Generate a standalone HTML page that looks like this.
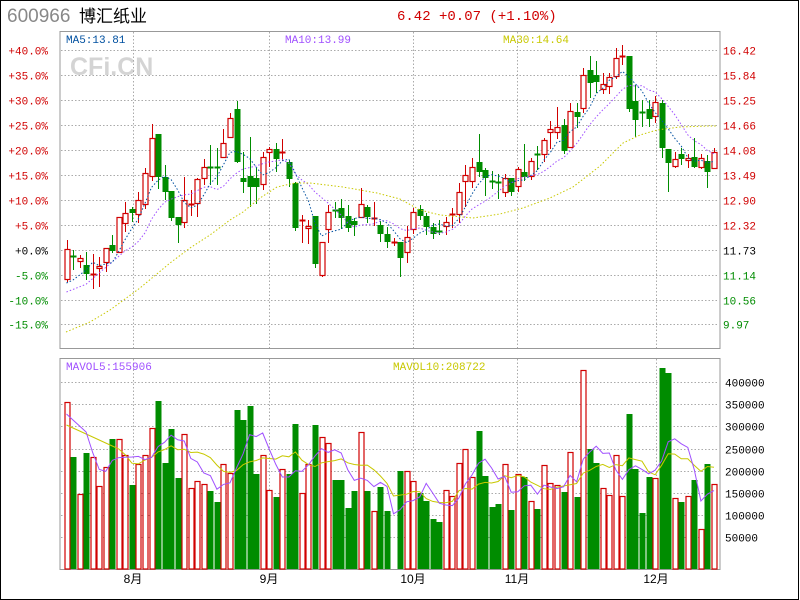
<!DOCTYPE html>
<html><head><meta charset="utf-8">
<style>
html,body{margin:0;padding:0;background:#fff;}
body{width:800px;height:600px;overflow:hidden;position:relative;}
svg{position:absolute;left:0;top:0;}
text{font-family:"Liberation Mono","DejaVu Sans Mono",monospace;font-size:11px;}
</style></head>
<body>
<svg id="s" width="800" height="600" xmlns="http://www.w3.org/2000/svg">
<rect x="0.5" y="0.5" width="798" height="599" fill="#fff" stroke="#000"/>
<text x="7" y="22" style="font-family:'Liberation Sans',sans-serif;font-size:19px" fill="#888">600966</text>
<text x="79" y="22" style="font-family:'Liberation Sans','Noto Sans CJK SC',sans-serif;font-size:17px" fill="#000">博汇纸业</text>
<text x="397" y="20" style="font-size:14px" fill="#d00000">6.42 +0.07 (+1.10%)</text>
<rect x="60" y="31.5" width="660" height="317" fill="none" stroke="#999"/>
<rect x="60" y="358.5" width="660" height="211" fill="none" stroke="#999"/>
<text x="70" y="75" style="font-family:'Liberation Sans',sans-serif;font-size:25px;font-weight:bold" fill="#d4d4d4">CFi.CN</text>
<g id="grid" stroke="#aaa" stroke-dasharray="1.5 2" stroke-width="1"></g>
<g id="lab"></g>
<g id="draw"></g>
<text x="66" y="43" fill="#0050a0">MA5:13.81</text>
<text x="285" y="43" fill="#a050ff">MA10:13.99</text>
<text x="503" y="43" fill="#c8c800">MA30:14.64</text>
<text x="66" y="370" fill="#a050ff">MAVOL5:155906</text>
<text x="393" y="370" fill="#c8c800">MAVOL10:208722</text>
</svg>
<script>
var NS="http://www.w3.org/2000/svg";
function el(p,t,a,txt){var e=document.createElementNS(NS,t);for(var k in a)e.setAttribute(k,a[k]);if(txt!==undefined)e.textContent=txt;document.getElementById(p).appendChild(e);return e;}
var R="#d00000",G="#008c00";
// grid
var lvls=["+40.0%","+35.0%","+30.0%","+25.0%","+20.0%","+15.0%","+10.0%","+5.0%","+0.0%","-5.0%","-10.0%","-15.0%"];
var rl=["16.42","15.84","15.25","14.66","14.08","13.49","12.90","12.32","11.73","11.14","10.56","9.97"];
for(var k=0;k<12;k++){var y=Math.round(50+24.95*k)+0.5;
 el("grid","line",{x1:61,x2:719,y1:y,y2:y});
 var c=k<8?R:(k==8?"#000":G);
 el("lab","text",{x:48,y:y+4,"text-anchor":"end",fill:c},lvls[k]);
 el("lab","text",{x:723,y:y+4,fill:c},rl[k]);}
[133,269,413,517,656].forEach(function(x){el("grid","line",{x1:x+.5,x2:x+.5,y1:32,y2:348});el("grid","line",{x1:x+.5,x2:x+.5,y1:359,y2:569});});
var vl=["400000","350000","300000","250000","200000","150000","100000","50000"];
for(k=0;k<8;k++){var y=Math.round(382+22.2*k)+0.5;el("grid","line",{x1:61,x2:719,y1:y,y2:y});el("lab","text",{x:725,y:y+4,fill:"#000"},vl[k]);}
var ms=[[133,"8月"],[269,"9月"],[413,"10月"],[517,"11月"],[656,"12月"]];
ms.forEach(function(m){el("lab","text",{x:m[0],y:583,"text-anchor":"middle",fill:"#000",style:"font-family:'Liberation Sans','Noto Sans CJK SC',sans-serif;font-size:12px"},m[1]);});
// candles [top,bottom,wickTop,wickBottom,type]
var C=[[249,279,240,282,'r'],[256,256,250,270,'g'],[258,261,255,268,'r'],[265,274,252,280,'g'],[274,274,254,289,'r'],[266,268,257,287,'r'],[248,262,248,272,'r'],[245,251,235,253,'g'],[217,252,217,252,'r'],[213,223,202,232,'r'],
[209,213,207,222,'g'],[200,214,192,223,'r'],[173,204,168,209,'r'],[138,176,124,181,'r'],[134,177,134,189,'g'],[177,192,165,200,'g'],[191,218,191,221,'g'],[217,225,217,243,'g'],[200,222,177,228,'r'],[204,204,190,216,'r'],
[179,203,178,217,'r'],[167,178,159,185,'r'],[167,167,145,185,'g'],[167,167,148,185,'g'],[143,157,129,158,'r'],[118,137,113,138,'r'],[109,162,101,163,'g'],[178,182,152,193,'g'],[176,187,137,207,'g'],[178,187,168,204,'g'],
[157,184,152,190,'r'],[149,152,147,167,'r'],[149,159,143,172,'g'],[152,152,139,161,'r'],[162,179,160,187,'g'],[183,228,182,231,'g'],[220,220,215,243,'r'],[226,228,220,244,'r'],[216,264,216,268,'g'],[242,275,242,277,'r'],
[212,229,205,243,'r'],[210,210,202,218,'g'],[208,218,199,229,'g'],[216,228,205,232,'g'],[221,225,218,236,'g'],[204,217,188,218,'r'],[207,217,205,223,'g'],[218,218,202,226,'r'],[225,234,221,242,'g'],[234,242,227,248,'g'],
[242,242,238,246,'r'],[242,258,242,277,'g'],[237,252,226,263,'r'],[212,229,208,234,'r'],[209,216,205,220,'g'],[216,227,213,235,'g'],[227,234,223,239,'g'],[231,231,220,235,'g'],[222,226,217,235,'r'],[214,214,208,228,'r'],
[192,214,183,223,'r'],[175,181,165,207,'r'],[167,181,158,188,'r'],[162,172,134,177,'g'],[170,178,168,196,'g'],[181,181,171,189,'g'],[182,183,174,199,'g'],[178,192,174,197,'r'],[178,192,178,196,'g'],[169,186,167,192,'r'],
[172,177,144,181,'g'],[161,176,158,180,'r'],[154,154,146,170,'g'],[140,154,138,162,'r'],[129,132,121,149,'r'],[127,132,107,139,'r'],[125,151,119,154,'g'],[111,147,103,147,'r'],[112,117,103,128,'g'],[75,108,68,113,'r'],
[70,83,56,98,'g'],[75,82,61,93,'g'],[84,89,73,94,'r'],[77,86,73,94,'r'],[58,76,48,79,'r'],[56,56,45,65,'r'],[56,109,56,112,'g'],[101,120,85,137,'g'],[112,112,100,127,'g'],[109,119,100,127,'g'],
[102,116,96,123,'r'],[103,148,100,158,'g'],[149,163,149,192,'g'],[159,166,152,168,'r'],[154,159,148,165,'g'],[158,160,154,168,'r'],[157,167,138,168,'g'],[158,167,154,169,'r'],[161,172,155,188,'g'],[152,168,148,168,'r']];
var V=[402,457,494,453,457,486,467,439,439,455,485,464,455,428,401,463,429,478,434,488,481,484,491,502,464,473,410,420,406,474,
455,490,497,469,474,424,493,464,425,437,443,480,480,508,491,432,491,511,487,511,569,471,471,481,493,501,519,522,490,496,
463,449,477,431,476,507,504,464,510,474,477,501,509,465,483,485,492,452,497,370,449,463,488,495,455,496,414,469,513,477,
478,368,373,498,502,496,480,529,464,484];
function cx(i){return 66.5+6.54*i;}
var close=[],g="draw";
C.forEach(function(c,i){var x=Math.round(cx(i))+0.5,col=c[4]=='r'?R:G;
 close.push(c[4]=='r'?c[0]:c[1]);
 el(g,"line",{x1:x,x2:x,y1:c[2],y2:c[3],stroke:col});
 if(c[1]-c[0]<1.5){el(g,"line",{x1:x-3,x2:x+3,y1:c[0]+.5,y2:c[0]+.5,stroke:col,"stroke-width":2});}
 else if(c[4]=='r'){el(g,"rect",{x:x-2.5,y:c[0]+.5,width:5,height:c[1]-c[0],fill:"#fff",stroke:col,"stroke-width":1.2});}
 else{el(g,"rect",{x:x-3,y:c[0],width:6,height:c[1]-c[0],fill:col});}
 // volume
 var vy=V[i];if(vy<568){
 if(c[4]=='r')el(g,"rect",{x:x-2.5,y:vy+.5,width:5,height:568.5-vy,fill:"#fff",stroke:col,"stroke-width":1.2});
 else el(g,"rect",{x:x-3,y:vy,width:6,height:569-vy,fill:col});}
});
function ma(a,n,base){var r=[];for(var i=0;i<a.length;i++){var s=0,m=0;for(var j=Math.max(0,i-n+1);j<=i;j++){s+=a[j];m++;}r.push(s/m);}return r;}
function line(a,col,dash,start){var p=[];for(var i=start;i<a.length;i++)p.push(cx(i).toFixed(1)+","+a[i].toFixed(1));
 var at={points:p.join(" "),fill:"none",stroke:col,"stroke-width":1};if(dash)at["stroke-dasharray"]=dash;el(g,"polyline",at);}
var m5=ma(close,5),m10=ma(close,10);
m5[0]=283;m5[1]=280;m5[2]=275;m5[3]=270;
for(var i=0;i<9;i++)m10[i]=292-i*2.6+ (i>3?-(i-3)*3:0);
line(m10,"#a050ff","1.5 2",0);
line(m5,"#0050a0","1.5 2",0);
el(g,"polyline",{points:"66,332 90,322 110,310 140,288 170,263 190,248 210,235 230,220 243,212 260,198 277,187 295,183 310,183 343,187 377,193 400,199 420,210 440,215 473,218 500,214 523,208 550,198 573,187 600,166 623,143 640,135 657,130 680,127 707,126 716,126",fill:"none",stroke:"#c8c800","stroke-width":1,"stroke-dasharray":"1.5 2"});
// volume MAs (from bar tops relative to 569)
var vv=V.map(function(y){return 569-y;});
var mv5=ma(vv,5).map(function(v){return 569-v;}),mv10=ma(vv,10).map(function(v){return 569-v;});
for(i=0;i<4;i++)mv5[i]=414+i*6;for(i=0;i<9;i++)mv10[i]=425+i*3;
line(mv10,"#c8c800",null,0);
line(mv5,"#a050ff",null,0);
</script>
</body></html>
